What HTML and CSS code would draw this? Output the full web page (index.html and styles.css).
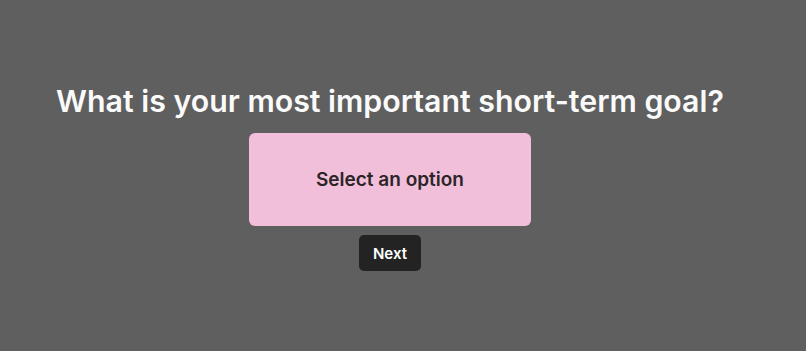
FILE: index.html
```html
<!DOCTYPE html>
<html lang="en">
<head>
    <meta charset="UTF-8">
    <meta name="viewport" content="width=device-width, initial-scale=1.0">
    <title>Question</title>
    <link rel="stylesheet" href="styles.css">
</head>
<body>
    <div class="quiz">
        <h1 class="question">What is your most important short-term goal?</h1>
        <div class="option-box">Select an option</div>
        <button class="next-btn">Next</button>
    </div>
</body>
</html>
```

FILE: styles.css
```css
body {
    margin: 0;
    background-color: #5f5f5f;
    font-family: Inter, "Noto Sans", sans-serif;
}

.quiz {
    width: 780px;
    display: flex;
    flex-direction: column;
    align-items: center;
    padding-top: 81px;
}

.question {
    margin: 0;
    font-size: 30.3px;
    font-weight: 600;
    line-height: 40px;
    color: #fafafa;
    white-space: nowrap;
}

.option-box {
    margin-top: 12px;
    width: 282px;
    height: 93px;
    display: flex;
    align-items: center;
    justify-content: center;
    background-color: #f2bfdb;
    border-radius: 6px;
    color: #2b2528;
    font-size: 19px;
    font-weight: 600;
}

.next-btn {
    margin-top: 9px;
    width: 62px;
    height: 36px;
    border: none;
    border-radius: 5px;
    background-color: #232323;
    color: white;
    font-family: inherit;
    font-size: 15px;
    font-weight: 600;
    cursor: pointer;
}
```
